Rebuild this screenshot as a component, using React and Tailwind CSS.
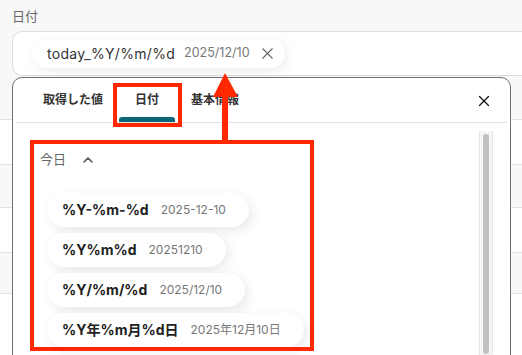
import { X, ChevronUp } from 'lucide-react'

const formats = [
  { fmt: '%Y-%m-%d', sample: '2025-12-10' },
  { fmt: '%Y%m%d', sample: '20251210' },
  { fmt: '%Y/%m/%d', sample: '2025/12/10' },
  { fmt: '%Y年%m月%d日', sample: '2025年12月10日' },
]

const tabs = ['取得した値', '日付', '基本情報']

function FormatChip({ fmt, sample }) {
  return (
    <div className="flex h-[34px] w-fit items-center gap-[12px] rounded-full bg-white pl-[15px] pr-[23px] shadow-[3px_4px_12px_rgba(0,0,0,0.09)]">
      <span className="text-[14px] font-bold text-[#222]">{fmt}</span>
      <span className="text-[12px] text-[#777]">{sample}</span>
    </div>
  )
}

export default function App() {
  return (
    <div className="relative h-[355px] w-[522px] overflow-hidden bg-[#f8f8f8] font-['Inter','Noto_Sans_CJK_JP',sans-serif]">
      <div className="pl-[12px] pt-[6px] text-[13px] leading-[20px] text-[#666]">日付</div>

      <div className="ml-[12px] mt-[5px] flex h-[45px] items-center rounded-l-[10px] border border-r-0 border-[#dcdcdc] bg-white pl-[19px]">
        <div className="flex h-[29px] items-center rounded-full bg-white pl-[15px] pr-[8px] shadow-[2px_3px_12px_rgba(0,0,0,0.08)]">
          <span className="text-[14px] tracking-[0.3px] text-[#333]">today_%Y/%m/%d</span>
          <span className="ml-[9px] text-[12.5px] text-[#777]">2025/12/10</span>
          <X size={19} strokeWidth={1.4} className="ml-[8px] text-[#666]" />
        </div>
      </div>

      {/* rows behind the popover */}
      <div className="flex flex-col">
        <div className="h-[44px] border-b border-[#e2e2e2] bg-[#f8f8f8]" />
        <div className="h-[45px] border-b border-[#e2e2e2] bg-white" />
        <div className="h-[43px] border-b border-[#e2e2e2] bg-[#f8f8f8]" />
        <div className="h-[45px] border-b border-[#e2e2e2] bg-white" />
        <div className="h-[41px] border-b border-[#e2e2e2] bg-[#f8f8f8]" />
        <div className="h-[80px] bg-white" />
      </div>

      {/* popover */}
      <div className="absolute left-[12px] top-[77px] flex h-[300px] w-[499px] flex-col rounded-t-[10px] border border-[#6e6e6e] bg-white">
        <div className="mx-[3px] flex h-[45px] items-end border-b border-[#e3e3e3]">
          <div className="ml-[11px] flex h-full">
            {tabs.map((t) => (
              <div key={t} className="flex h-full flex-col px-[16px]">
                <div className="flex flex-1 items-center pt-[4px] text-[12px] font-semibold text-[#333]">{t}</div>
                <div className={t === '日付' ? '-mx-[16px] h-[5px] rounded-t-[3px] bg-[#0c6579]' : 'h-[5px]'} />
              </div>
            ))}
          </div>
          <X size={18} strokeWidth={1.6} className="mb-[12px] ml-auto mr-[14px] text-[#111]" />
        </div>

        <div className="flex flex-1">
          <div className="flex flex-1 flex-col pl-[27px] pt-[27px]">
            <div className="flex items-center gap-[14px] text-[13px] text-[#666]">
              今日
              <ChevronUp size={16} strokeWidth={2.4} className="text-[#555]" />
            </div>
            <div className="mt-[23px] flex flex-col gap-[6px] pl-[7px]">
              {formats.map((f) => (
                <FormatChip key={f.fmt} {...f} />
              ))}
            </div>
          </div>
          <div className="mr-[17px] mt-[8px] w-[14px] border-x border-[#e8e8e8] bg-[#f5f5f5] px-[3px] pt-[3px]">
            <div className="h-[220px] rounded-full bg-[#c1c1c1]" />
          </div>
        </div>
      </div>

      {/* annotations */}
      <div className="absolute left-[113px] top-[83px] h-[44px] w-[69px] border-4 border-[#ff2800]" />
      <div className="absolute left-[30px] top-[140px] h-[211px] w-[284px] border-4 border-[#ff2800]" />
      <svg className="absolute left-[210px] top-[70px]" width="32" height="74" viewBox="0 0 32 74">
        <rect x="12" y="24" width="6" height="50" fill="#ff2800" />
        <polygon points="15,3 3,27 28,27" fill="#ff2800" />
      </svg>
    </div>
  )
}
